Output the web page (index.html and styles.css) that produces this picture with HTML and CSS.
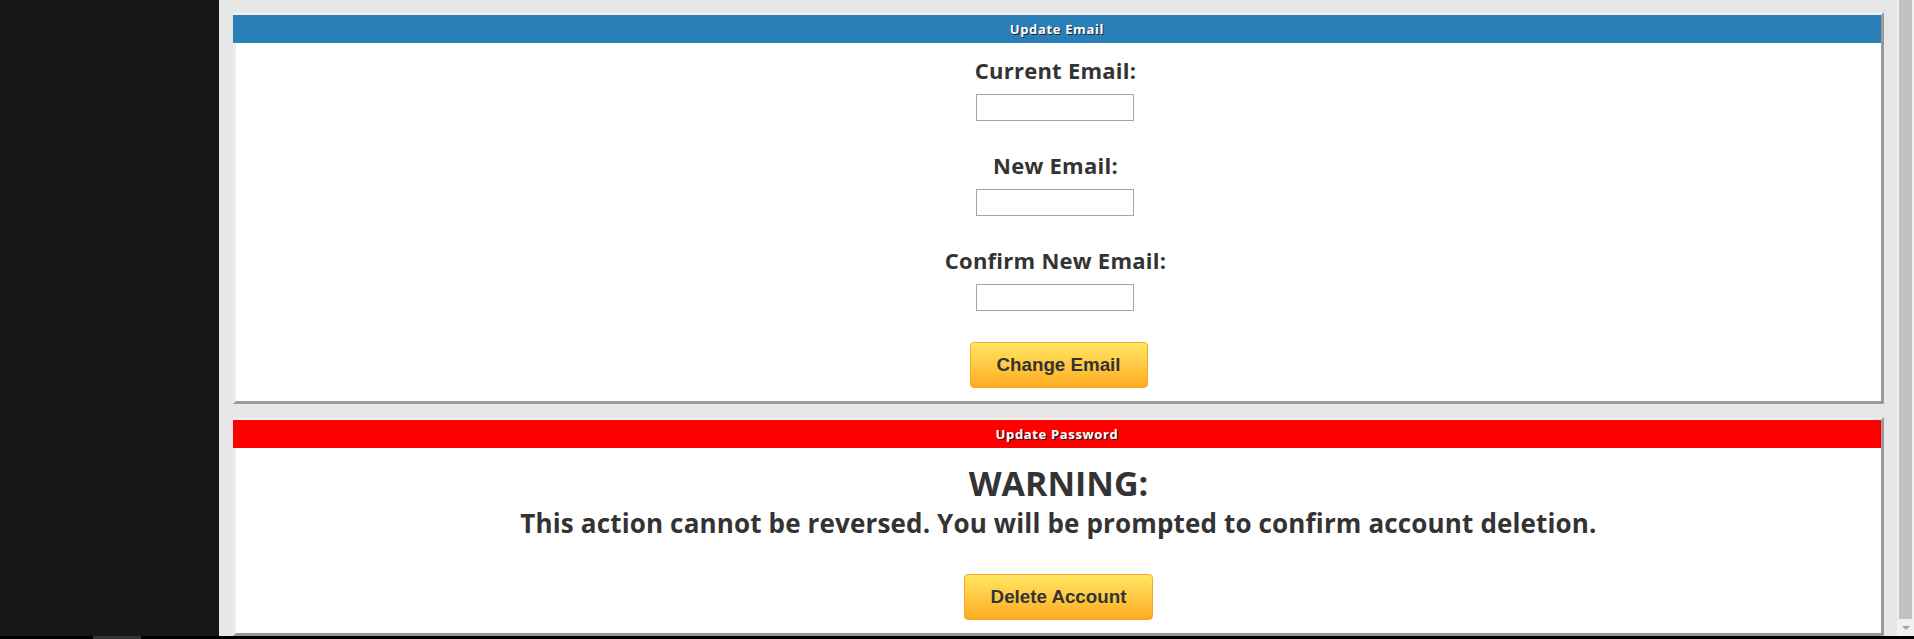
FILE: index.html
```html
<!DOCTYPE html>
<html>
<head>
<meta charset="utf-8">
<title>Account Settings</title>
<link rel="stylesheet" href="styles.css">
</head>
<body>
<div class="screen">
  <aside class="sidebar"></aside>
  <main class="content">
    <section class="panel">
      <h2 class="panel-title title-blue">Update Email</h2>
      <div class="panel-body">
        <div class="field">
          <label class="field-label">Current Email:</label>
          <input class="field-input" type="text">
        </div>
        <div class="field">
          <label class="field-label">New Email:</label>
          <input class="field-input" type="text">
        </div>
        <div class="field">
          <label class="field-label">Confirm New Email:</label>
          <input class="field-input" type="text">
        </div>
        <button class="btn btn-email">Change Email</button>
      </div>
    </section>
    <section class="panel panel-second">
      <h2 class="panel-title title-red">Update Password</h2>
      <div class="panel-body panel-body-warn">
        <h1 class="warn-title">WARNING:</h1>
        <p class="warn-text">This action cannot be reversed. You will be prompted to confirm account deletion.</p>
        <button class="btn btn-delete">Delete Account</button>
      </div>
    </section>
  </main>
  <div class="scrollbar">
    <div class="scroll-thumb"></div>
    <div class="scroll-down"><span class="scroll-arrow"></span></div>
  </div>
</div>
<div class="taskbar"><span class="task-item"></span></div>
</body>
</html>
```
FILE: styles.css
```css
html, body {
  margin: 0;
  padding: 0;
  width: 1914px;
  height: 639px;
  overflow: hidden;
  background: #000;
  font-family: "Open Sans", "Liberation Sans", sans-serif;
}
.screen {
  display: flex;
  height: 636px;
}
.sidebar {
  width: 219px;
  background: #171717;
  flex: none;
}
.content {
  flex: 1;
  background: #e6e6e6;
  padding: 12px 13px 0 14px;
  display: flex;
  flex-direction: column;
  gap: 13px;
  overflow: hidden;
}
.panel {
  background: #fff;
  border-style: solid;
  border-width: 3px;
  border-color: #eeeeee #999999 #999999 #eeeeee;
  flex: none;
}
.panel-second {
  flex: 1;
  display: flex;
  flex-direction: column;
}
.panel-title {
  margin: 0 0 0 -3px;
  height: 28px;
  line-height: 28px;
  text-align: center;
  color: #fff;
  font-size: 13px;
  letter-spacing: 0.65px;
  font-weight: 700;
  text-shadow: 1px 1px 0 #222;
}
.title-blue { background: #2980b9; }
.title-red { background: #ff0000; }
.panel-body {
  display: flex;
  flex-direction: column;
  align-items: center;
  padding: 12px 0 13px;
  color: #333;
}
.field {
  display: flex;
  flex-direction: column;
  align-items: center;
  gap: 9px;
  margin-bottom: 29px;
  padding-right: 6px;
}
.field:nth-child(3) { margin-bottom: 31px; }
.field-label {
  font-size: 22px;
  line-height: 30px;
  letter-spacing: 0.25px;
  font-weight: 700;
  color: #333;
}
.field-input {
  box-sizing: border-box;
  width: 158px;
  height: 27px;
  margin: 0 1px 0 0;
  border: 1px solid #a5a5a5;
  background: #fff;
  padding: 2px 4px;
}
.btn {
  box-sizing: border-box;
  height: 46px;
  padding: 0 26px;
  border: 1px solid #f5a623;
  border-radius: 4px;
  background: linear-gradient(#ffe763, #ffaa22);
  font-family: "Liberation Sans", Arial, sans-serif;
  font-weight: 700;
  font-size: 18.75px;
  color: #333;
}
.panel-body-warn {
  padding-top: 15px;
  flex: 1;
}
.warn-title {
  margin: 0;
  font-size: 34px;
  line-height: 40px;
  font-weight: 700;
}
.warn-text {
  margin: 3px 0 34px;
  font-size: 26px;
  line-height: 34px;
  letter-spacing: 0.15px;
  font-weight: 700;
}
.scrollbar {
  width: 17px;
  background: #f1f1f1;
  display: flex;
  flex-direction: column;
  align-items: center;
  flex: none;
}
.scroll-thumb {
  width: 13px;
  flex: 1;
  background: #c1c1c1;
}
.scroll-down {
  height: 17px;
  width: 17px;
  display: flex;
  align-items: center;
  justify-content: center;
}
.scroll-arrow {
  width: 0;
  height: 0;
  border-left: 4px solid transparent;
  border-right: 4px solid transparent;
  border-top: 4px solid #a3a3a3;
}
.taskbar {
  height: 3px;
  background: #000;
  display: flex;
}
.task-item {
  margin-left: 93px;
  width: 48px;
  background: #333;
}
```
